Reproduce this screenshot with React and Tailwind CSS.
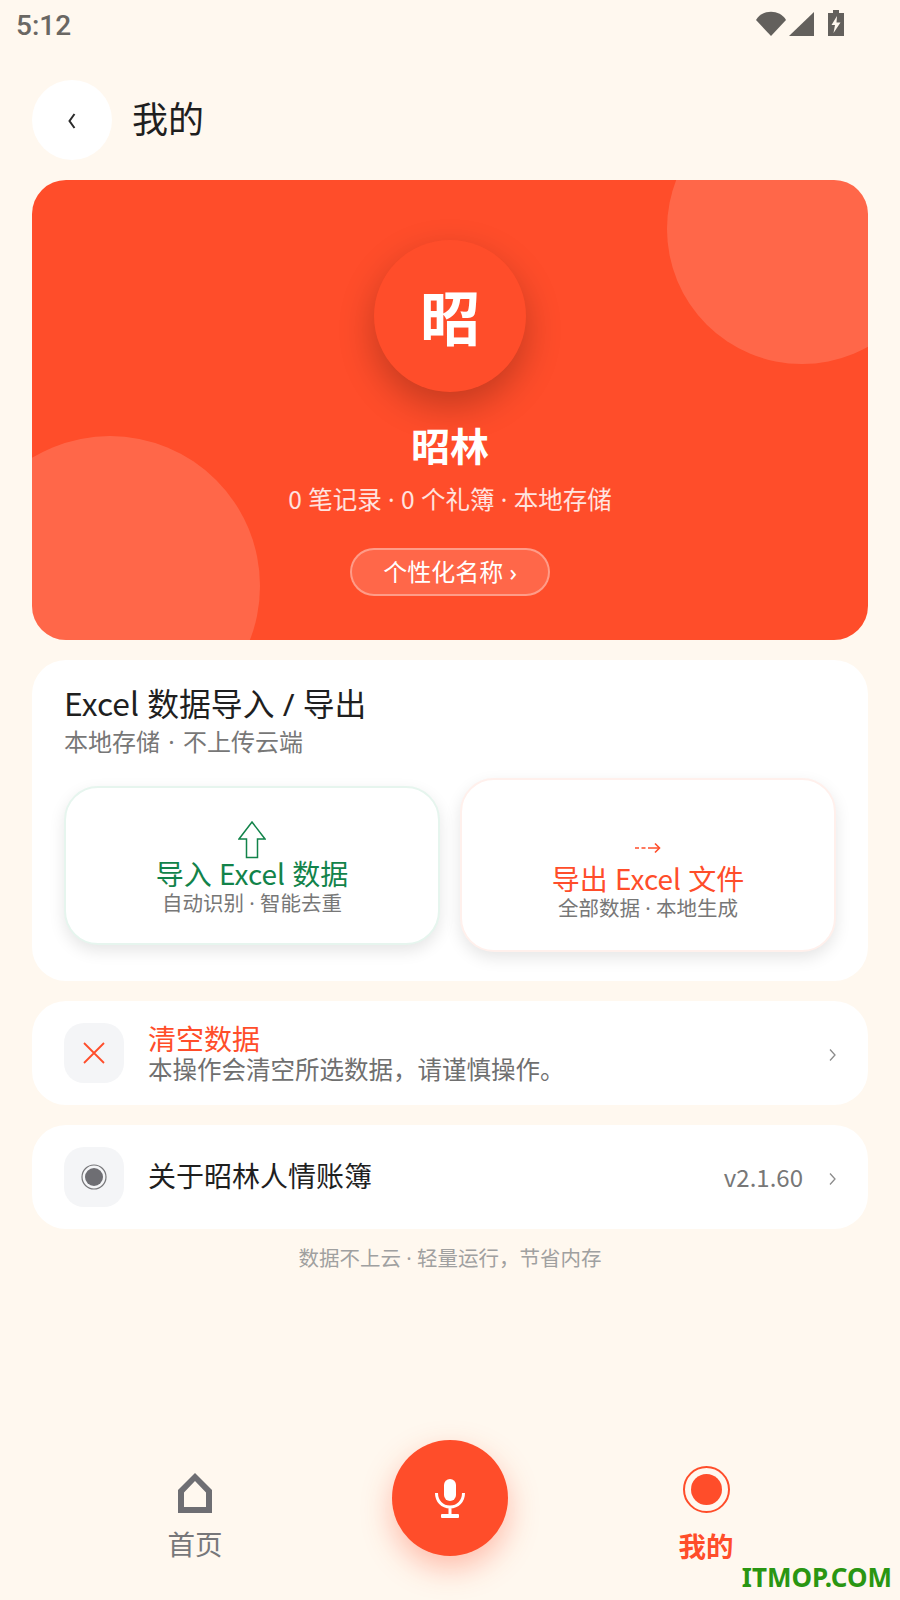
const font = { fontFamily: '"Noto Sans", "Noto Sans CJK SC", sans-serif' }

// Latin runs in the reference use the CJK font's narrower letters
function Latin({ children }) {
  return <span className="font-['Noto_Sans_CJK_SC',sans-serif]">{children}</span>
}

function StatusBar() {
  return (
    <div className="flex h-[50px] items-center justify-between pl-[16px] pr-[54px] text-[#6a6763]">
      <span className="mt-[2px] text-[28px] leading-none font-medium font-['Roboto',sans-serif]">5:12</span>
      <svg width="90" height="28" viewBox="0 0 90 28" className="mb-[2px]">
        <path d="M0 10 C6 -1 24 -1 30 10 L15 26 Z" fill="#63605c" />
        <path d="M33 26 L58 2 V26 Z" fill="#63605c" />
        <path d="M72 3 H77 V0 H83 V3 H88 V26 H72 Z" fill="#63605c" />
        <path d="M81 6 L75.500 15 H79 L77.500 23 L84.500 12.500 H80.500 Z" fill="#fff8ef" />
      </svg>
    </div>
  )
}

function Header() {
  return (
    <div className="mt-[30px] flex items-center gap-[20px] px-[32px]">
      <div className="flex h-[80px] w-[80px] items-center justify-center rounded-full bg-white">
        <svg width="12" height="20" viewBox="0 0 12 20" fill="none" stroke="#2a2a2a" strokeWidth="2" className="mt-[2px]">
          <path d="M8.500 3 L3.500 10 L8.500 17" />
        </svg>
      </div>
      <h1 className="text-[36px] leading-[50px] text-[#1f1f1f]">我的</h1>
    </div>
  )
}

function Hero() {
  return (
    <div className="relative mx-[32px] mt-[20px] flex h-[460px] flex-col items-center overflow-hidden rounded-[34px] bg-[#ff4d2a] pt-[60px]">
      <div className="absolute right-[-69px] top-[-86px] h-[270px] w-[270px] rounded-full bg-white/15" />
      <div className="absolute bottom-[-96px] left-[-72px] h-[300px] w-[300px] rounded-full bg-white/15" />
      <div className="relative flex h-[152px] w-[152px] items-center justify-center rounded-full bg-[#ff4d2a] pt-[4px] text-[60px] font-bold text-white shadow-[0_14px_36px_rgba(0,0,0,0.24)]">
        昭
      </div>
      <div className="relative mt-[26px] text-[39px] leading-[56px] font-bold text-white">昭林</div>
      <div className="relative mt-[7px] text-[24.500px] leading-[35px] text-white/85">
        <Latin>0</Latin> 笔记录 · <Latin>0</Latin> 个礼簿 · 本地存储
      </div>
      <div className="relative mt-[31px] flex h-[48px] w-[200px] items-center justify-center rounded-full border-2 border-white/35 bg-white/15 text-[24px] text-white">
        个性化名称 ›
      </div>
    </div>
  )
}

function ActionCard({ title, sub, color, border, className, children }) {
  return (
    <div className={`flex w-[376px] flex-col items-center rounded-[34px] border-2 bg-white shadow-[0_6px_16px_rgba(0,0,0,0.10)] ${border} ${className}`}>
      {children}
      <div className={`text-[28px] leading-[29px] ${color}`}>{title}</div>
      <div className="text-[20.500px] leading-[28px] text-[#777777]">{sub}</div>
    </div>
  )
}

function ExcelCard() {
  return (
    <div className="mx-[32px] mt-[20px] rounded-[34px] bg-white px-[32px] pb-[29px] pt-[20px]">
      <div className="text-[31.800px] leading-[44px] text-[#1f1f1f]"><Latin>Excel</Latin> 数据导入 / 导出</div>
      <div className="text-[24px] leading-[31px] text-[#777777]">本地存储 <span className="mx-[2px]">·</span> 不上传云端</div>
      <div className="mt-[21px] flex h-[174px] items-center justify-between">
        <ActionCard
          title={<>导入 <Latin>Excel</Latin> 数据</>}
          sub="自动识别 · 智能去重"
          color="text-[#12834a]"
          border="border-[#e6f5ee]"
          className="h-[159px]"
        >
          <svg width="28" height="38" viewBox="0 0 28 38" fill="none" stroke="#12834a" strokeWidth="1.500" className="mt-[33px]">
            <path d="M14 1 L27 18 H19.500 V36.500 H8.500 V18 H1 Z" />
          </svg>
        </ActionCard>
        <ActionCard
          title={<>导出 <Latin>Excel</Latin> 文件</>}
          sub="全部数据 · 本地生成"
          color="text-[#ff4d2a]"
          border="border-[#fff0ec]"
          className="h-[174px]"
        >
          <svg width="26" height="12" viewBox="0 0 26 12" fill="none" stroke="#ff4d2a" strokeWidth="1.600" className="mb-[10px] mt-[62px]">
            <path d="M0 6 H4 M6.500 6 H10.500 M13 6 H24" />
            <path d="M20 1.500 L24.500 6 L20 10.500" />
          </svg>
        </ActionCard>
      </div>
    </div>
  )
}

function Row({ icon, title, titleClass, sub, right }) {
  return (
    <div className="mx-[32px] mt-[20px] flex h-[104px] items-center rounded-[34px] bg-white pl-[32px] pr-[32px]">
      <div className="flex h-[60px] w-[60px] items-center justify-center rounded-[20px] bg-[#f4f5f7]">{icon}</div>
      <div className="ml-[24px] flex-1">
        <div className={titleClass}>{title}</div>
        {sub && <div className="text-[24.500px] leading-[29px] text-[#6f6f6f]">{sub}</div>}
      </div>
      {right && <span className="mr-[26px] text-[24px] text-[#777777]"><Latin>{right}</Latin></span>}
      <svg width="7" height="12" viewBox="0 0 7 12" fill="none" stroke="#8b8b8b" strokeWidth="1.300" className="mt-[4px]">
        <path d="M1 0.500 L6 6 L1 11.500" />
      </svg>
    </div>
  )
}

function BottomNav() {
  return (
    <div className="mt-auto grid grid-cols-[390px_120px_390px] items-start pb-[34px]">
      <div className="flex flex-col items-center pt-[33px]">
        <svg width="34" height="40" viewBox="0 0 34 40">
          <path d="M0 40 V17 L17 0 L34 17 V40 Z M6 34 H28 V19.500 L17 8 L6 19.500 Z" fill="#6e6e73" fillRule="evenodd" />
        </svg>
        <span className="mt-[13px] text-[27.500px] leading-[38px] text-[#77777a]">首页</span>
      </div>
      <div className="flex justify-center">
        <div className="flex h-[116px] w-[116px] shrink-0 items-center justify-center rounded-full bg-[#ff4d2a] shadow-[0_12px_30px_rgba(255,77,42,0.35)]">
          <svg width="30" height="39" viewBox="0 0 30 39" fill="none">
            <rect x="9" y="0" width="12" height="22" rx="6" fill="#ffffff" />
            <path d="M1.500 14 C1.500 22 7 28 15 28 C23 28 28.500 22 28.500 14 M15 28 V36" stroke="#ffffff" strokeWidth="3" />
            <rect x="6" y="35" width="18" height="4" rx="1" fill="#ffffff" />
          </svg>
        </div>
      </div>
      <div className="flex flex-col items-center pl-[2px] pt-[26px]">
        <svg width="47" height="47" viewBox="0 0 47 47">
          <circle cx="23.500" cy="23.500" r="22.500" fill="none" stroke="#ff4d2a" strokeWidth="2" />
          <circle cx="23.500" cy="23.500" r="15.500" fill="#ff4d2a" />
        </svg>
        <span className="mt-[15px] text-[27.500px] leading-[38px] font-bold text-[#ff4d2a]">我的</span>
      </div>
    </div>
  )
}

export default function App() {
  return (
    <div className="relative flex h-[1600px] w-[900px] flex-col overflow-hidden bg-[#fff8ef]" style={font}>
      <StatusBar />
      <Header />
      <Hero />
      <ExcelCard />
      <Row
        title="清空数据"
        titleClass="text-[28px] leading-[32px] text-[#ff4d2a]"
        sub="本操作会清空所选数据，请谨慎操作。"
        icon={
          <svg width="24" height="24" viewBox="0 0 24 24" fill="none" stroke="#ff4d2a" strokeWidth="1.800">
            <path d="M2 2 L22 22 M22 2 L2 22" />
          </svg>
        }
      />
      <Row
        title="关于昭林人情账簿"
        titleClass="mb-[2px] text-[28px] leading-[36px] text-[#1f1f1f]"
        right="v2.1.60"
        icon={
          <svg width="26" height="26" viewBox="0 0 26 26">
            <circle cx="13" cy="13" r="12" fill="none" stroke="#77777a" strokeWidth="1.200" />
            <circle cx="13" cy="13" r="9" fill="#6e6e73" />
          </svg>
        }
      />
      <div className="mt-[14px] text-center text-[20.500px] leading-[30px] text-[#a0a0a0]">数据不上云 · 轻量运行，节省内存</div>
      <BottomNav />
      <div className="absolute bottom-[5px] right-[8px] text-[26px] leading-[36px] font-bold text-[#2a9612]">ITMOP.COM</div>
    </div>
  )
}
